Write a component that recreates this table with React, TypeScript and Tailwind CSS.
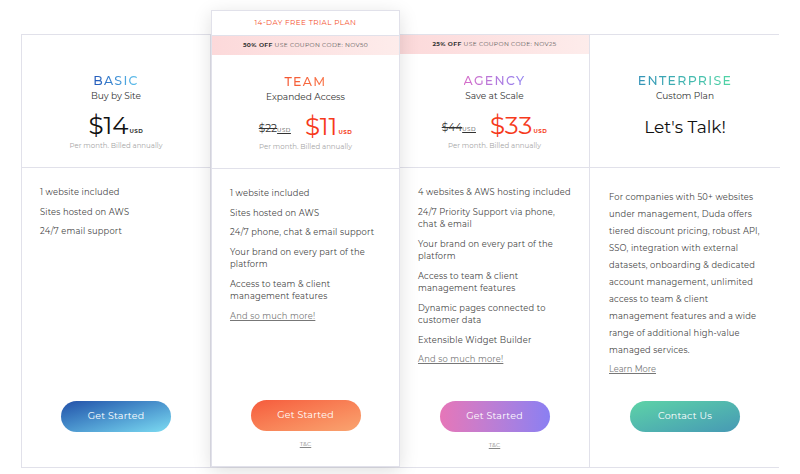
import type { ReactNode } from 'react'

type Plan = {
  key: string
  title: string
  titleClass: string
  subtitle: string
  band?: ReactNode
  price?: { old?: string; now: string; red?: boolean }
  talk?: boolean
  features?: string[]
  more?: boolean
  text?: string
  button: string
  buttonClass: string
  tc?: boolean
  featured?: boolean
}

const plans: Plan[] = [
  {
    key: 'basic',
    title: 'BASIC',
    titleClass: 'bg-gradient-to-r from-[#2456b8] to-[#63c6ee]',
    subtitle: 'Buy by Site',
    price: { now: '$14' },
    features: ['1 website included', 'Sites hosted on AWS', '24/7 email support'],
    button: 'Get Started',
    buttonClass: 'bg-gradient-to-br from-[#2450a8] to-[#7ddcf2]',
  },
  {
    key: 'team',
    title: 'TEAM',
    titleClass: 'bg-gradient-to-r from-[#f4542f] to-[#f9784c]',
    subtitle: 'Expanded Access',
    band: (
      <>
        <b className="font-bold text-[#333]">50% OFF</b>&nbsp;USE COUPON CODE: NOV50
      </>
    ),
    price: { old: '$22', now: '$11', red: true },
    features: [
      '1 website included',
      'Sites hosted on AWS',
      '24/7 phone, chat & email support',
      'Your brand on every part of the platform',
      'Access to team & client management features',
    ],
    more: true,
    button: 'Get Started',
    buttonClass: 'bg-gradient-to-br from-[#f55a3c] to-[#f9a470]',
    tc: true,
    featured: true,
  },
  {
    key: 'agency',
    title: 'AGENCY',
    titleClass: 'bg-gradient-to-r from-[#d66cc8] to-[#8f80f0]',
    subtitle: 'Save at Scale',
    band: (
      <>
        <b className="font-bold text-[#333]">25% OFF</b>&nbsp;USE COUPON CODE: NOV25
      </>
    ),
    price: { old: '$44', now: '$33', red: true },
    features: [
      '4 websites & AWS hosting included',
      '24/7 Priority Support via phone, chat & email',
      'Your brand on every part of the platform',
      'Access to team & client management features',
      'Dynamic pages connected to customer data',
      'Extensible Widget Builder',
    ],
    more: true,
    button: 'Get Started',
    buttonClass: 'bg-gradient-to-r from-[#e676b8] to-[#8a7ff2]',
    tc: true,
  },
  {
    key: 'enterprise',
    title: 'ENTERPRISE',
    titleClass: 'bg-gradient-to-r from-[#3593b8] to-[#52d6a4]',
    subtitle: 'Custom Plan',
    talk: true,
    text:
      'For companies with 50+ websites under management, Duda offers tiered discount pricing, robust API, SSO, integration with external datasets, onboarding & dedicated account management, unlimited access to team & client management features and a wide range of additional high-value managed services.',
    button: 'Contact Us',
    buttonClass: 'bg-gradient-to-br from-[#5ed3a6] to-[#4799b4]',
  },
]

function Column({ plan }: { plan: Plan }) {
  return (
    <div
      className={`flex flex-col bg-white ${
        plan.featured
          ? 'relative z-10 -mt-[25px] border border-[#e1e1ea] shadow-[0_4px_18px_rgba(0,0,0,0.13)]'
          : 'border-r border-[#e1e1ea] last:border-r-0'
      }`}
    >
      {plan.featured && (
        <div className="h-[25px] flex items-center justify-center text-[7.3px] tracking-[0.4px] text-[#f4502c] border-b border-[#e1e1ea]">
          14-DAY FREE TRIAL PLAN
        </div>
      )}
      <div
        className={`h-[19px] flex items-center justify-center text-[6px] tracking-[0.35px] text-[#555] ${
          plan.band ? 'bg-gradient-to-r from-[#fcd9da] to-[#fdeceb]' : ''
        }`}
      >
        {plan.band}
      </div>
      <div className="h-[114px] flex flex-col items-center pt-[19px] border-b border-[#e1e1ea]">
        <div
          className={`text-[12.5px] leading-[16px] font-medium tracking-[1.3px] bg-clip-text text-transparent ${plan.titleClass}`}
        >
          {plan.title}
        </div>
        <div className="text-[9px] leading-[12px] mt-[1px] text-[#333]">{plan.subtitle}</div>
        {plan.price && (
          <>
            <div className="flex items-end mt-[8px] h-[29px]">
              {plan.price.old && (
                <span className="text-[10.5px] leading-[14px] mb-[3px] mr-[14px] text-[#333] line-through">
                  {plan.price.old}
                  <span className="text-[5.5px] tracking-[0.5px]">USD</span>
                </span>
              )}
              <span
                className={`text-[24.5px] leading-[27px] ${plan.price.red ? 'text-[#f63a1c]' : 'text-[#111]'}`}
              >
                {plan.price.now}
              </span>
              <span
                className={`text-[5.5px] font-bold tracking-[0.5px] mb-[4px] ml-[1px] ${
                  plan.price.red ? 'text-[#f63a1c]' : 'text-[#333]'
                }`}
              >
                USD
              </span>
            </div>
            <div className="text-[7px] leading-[10px] mt-[2px] text-[#a6a6a6]">Per month. Billed annually</div>
          </>
        )}
        {plan.talk && <div className="text-[17px] leading-[20px] mt-[15px] text-[#111]">Let's Talk!</div>}
      </div>
      <div className="flex-1 flex flex-col">
        <div className={`flex-1 ${plan.text ? 'pt-[21px] pl-[19px] pr-[14px]' : 'pt-[18px] pl-[18px] pr-[17px]'}`}>
          {plan.features && (
            <ul className="flex flex-col gap-[7px]">
              {plan.features.map((f) => (
                <li key={f} className="text-[8.3px] leading-[12.5px] text-[#444] tracking-[0.2px]">
                  {f}
                </li>
              ))}
              {plan.more && (
                <li className="text-[8.3px] leading-[12.5px] text-[#777] underline tracking-[0.2px]">
                  And so much more!
                </li>
              )}
            </ul>
          )}
          {plan.text && (
            <>
              <p className="text-[8.3px] leading-[17px] text-[#444] tracking-[0.2px]">{plan.text}</p>
              <div className="mt-[4px] text-[8.3px] leading-[12.5px] text-[#777] underline">Learn More</div>
            </>
          )}
        </div>
        <div className="h-[66px] flex flex-col items-center">
          <button
            type="button"
            className={`w-[110px] h-[31px] rounded-full text-white text-[9.5px] tracking-[0.2px] ${plan.buttonClass}`}
          >
            {plan.button}
          </button>
          {plan.tc && <div className="mt-[9px] text-[6px] text-[#888] underline">T&amp;C</div>}
        </div>
      </div>
    </div>
  )
}

export default function App() {
  return (
    <div className="w-[800px] h-[474px] bg-white pt-[34px] pl-[21px] font-['Montserrat','Lato','Open_Sans',sans-serif]">
      <div className="grid grid-cols-[189px_189px_190px_190px] w-[758px] h-[434px] border border-[#e1e1ea]">
        {plans.map((p) => (
          <Column key={p.key} plan={p} />
        ))}
      </div>
    </div>
  )
}
